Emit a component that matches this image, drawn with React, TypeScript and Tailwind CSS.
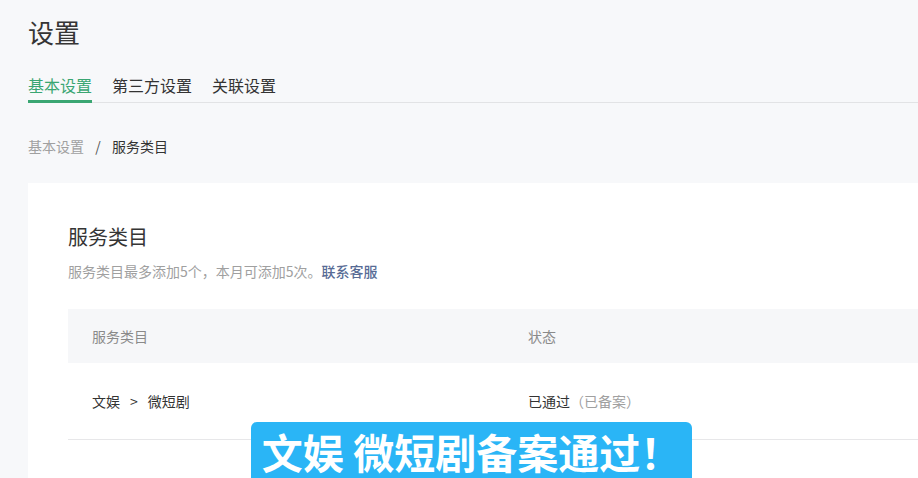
import React from "react";

const TABS = ["基本设置", "第三方设置", "关联设置"];

export default function App() {
  const active = 0;
  return (
    <div
      className="relative w-[918px] h-[478px] overflow-hidden bg-[#f7f8fa] pl-[28px] text-[#333]"
      style={{ fontFamily: '"Noto Sans CJK SC", "Noto Sans", sans-serif' }}
    >
      <h1 className="pt-[14px] text-[26px] leading-[36px] font-normal text-[#353535]">设置</h1>

      <div className="mt-[23px] flex gap-[20px] border-b border-[#e2e3e5]">
        {TABS.map((t, i) => (
          <div
            key={t}
            className={
              i === active
                ? "-mb-px pb-[3px] border-b-[3px] border-[#3aa672] text-[16px] leading-[24px] text-[#3aa672]"
                : "-mb-px pb-[3px] border-b-[3px] border-transparent text-[16px] leading-[24px] text-[#333]"
            }
          >
            {t}
          </div>
        ))}
      </div>

      <div className="mt-[33px] flex text-[14px] leading-[20px]">
        <span className="text-[#a0a0a0]">基本设置</span>
        <span className="w-[28px] text-center text-[#555]">/</span>
        <span className="text-[#333]">服务类目</span>
      </div>

      <div className="mt-[27px] bg-white pl-[40px] pt-[40px] pb-[40px]">
        <h2 className="text-[20px] leading-[28px] font-normal text-[#353535]">服务类目</h2>
        <p className="mt-[10px] text-[14px] leading-[20px] text-[#a0a0a0]">
          服务类目最多添加5个，本月可添加5次。
          <a className="text-[#576b95] font-medium">联系客服</a>
        </p>

        <div className="mt-[28px]">
          <div className="flex h-[54px] items-center bg-[#f6f7f9] pl-[24px] text-[14px] text-[#8a8a8a]">
            <div className="w-[436px]">服务类目</div>
            <div>状态</div>
          </div>
          <div className="flex h-[77px] items-center border-b border-[#e7e7e9] pl-[24px] text-[14px]">
            <div className="w-[436px] text-[#333]">
              文娱<span className="mx-[10px]">&gt;</span>微短剧
            </div>
            <div className="text-[#333]">
              已通过<span className="text-[#a0a0a0]">（已备案）</span>
            </div>
          </div>
        </div>
        <div className="h-[60px]" />
      </div>

      <div className="absolute left-[251px] top-[422px] flex h-[56px] w-[441px] items-start justify-center rounded-t-[6px] bg-[#2ab5f6] pt-[5px]">
        <span className="text-[41px] leading-[48px] font-bold text-white">
          文娱 微短剧备案通过！
        </span>
      </div>
    </div>
  );
}
